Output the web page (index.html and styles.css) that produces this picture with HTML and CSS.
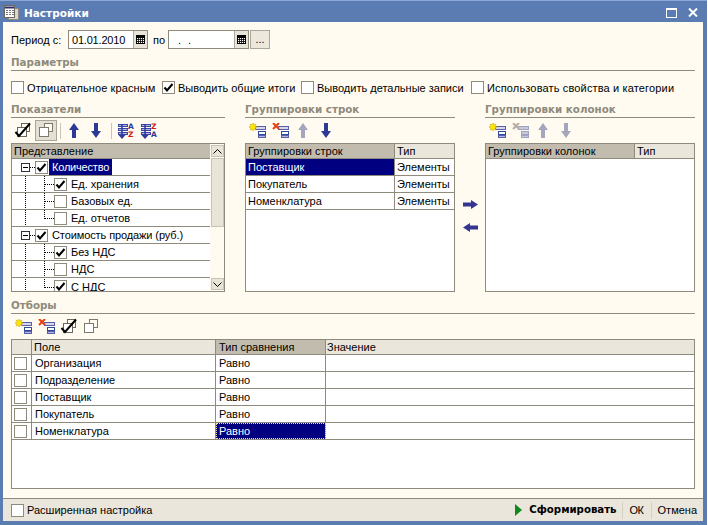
FILE: index.html
```html
<!DOCTYPE html>
<html lang="ru">
<head>
<meta charset="utf-8">
<title>Настройки</title>
<link rel="stylesheet" href="styles.css">
</head>
<body>
<svg class="defs" width="0" height="0">
  <defs>
    <g id="add">
      <rect x="6.500" y="3.500" width="10" height="3" fill="#d4d6ee" stroke="#5a60a8"/>
      <rect x="9.500" y="8.500" width="7" height="3" fill="#fff" stroke="#2f4c9c"/>
      <rect x="9.500" y="12.500" width="7" height="2" fill="#b4b8e0" stroke="#5a60a8"/>
      <path d="M4 0l1 2 2-1-1 2 2 1-2 1 1 2-2-1-1 2-1-2-2 1 1-2-2-1 2-1-1-2 2 1z" fill="#ffe600" stroke="#c9a800" stroke-width=".5"/>
    </g>
    <g id="del">
      <rect x="6.500" y="3.500" width="10" height="3" fill="#d4d6ee" stroke="#5a60a8"/>
      <rect x="9.500" y="8.500" width="7" height="3" fill="#fff" stroke="#2f4c9c"/>
      <rect x="9.500" y="12.500" width="7" height="2" fill="#b4b8e0" stroke="#5a60a8"/>
      <path d="M1 0l6 6M7 0L1 6" stroke="#e8400c" stroke-width="2" fill="none"/>
    </g>
    <g id="delOff">
      <rect x="6.500" y="3.500" width="10" height="3" fill="#c6c8dc" stroke="#a0a2c0"/>
      <rect x="9.500" y="8.500" width="7" height="3" fill="#c6c8dc" stroke="#a0a2c0"/>
      <rect x="9.500" y="12.500" width="7" height="2" fill="#c6c8dc" stroke="#a0a2c0"/>
      <path d="M1 0l6 6M7 0L1 6" stroke="#b8aca0" stroke-width="2" fill="none"/>
    </g>
    <path id="up" d="M3 15V7H0L5 0l5 7H7v8z"/>
    <path id="down" d="M3 0v8H0l5 7 5-7H7V0z"/>
    <g id="checkall">
      <rect x="7.500" y="1.500" width="8" height="8" fill="#fffbf0" stroke="#6b675e"/>
      <rect x="3.500" y="5.500" width="9" height="9" fill="#fff" stroke="#6b675e"/>
      <path d="M1.500 10l3.500 4 11-12.500" stroke="#000" stroke-width="2" fill="none"/>
    </g>
    <g id="uncheckall">
      <rect x="7.500" y="1.500" width="8" height="8" fill="#fffbf0" stroke="#7d796e"/>
      <rect x="2.500" y="5.500" width="9" height="9" fill="#fff" stroke="#7d796e"/>
    </g>
    <g id="sortaz">
      <rect x="1.500" y="1.500" width="9" height="2" fill="#b4b8e0" stroke="#3a46a4"/>
      <rect x="1.500" y="5.500" width="9" height="2" fill="#b4b8e0" stroke="#3a46a4"/>
      <rect x="1.500" y="9.500" width="9" height="2" fill="#b4b8e0" stroke="#3a46a4"/>
      <path d="M5 1v12" stroke="#2f3a9c" stroke-width="1.500"/>
      <path d="M1.500 12h7L5 16z" fill="#2f3a9c"/>
    </g>
    <path id="tick" d="M2.500 6.500l2.500 3 5.500-6.500" fill="none" stroke="#000" stroke-width="2"/>
    <g id="cal">
      <rect x="0.500" y="0.500" width="8" height="8" fill="#fff" stroke="#000"/>
      <path d="M0 2h9" stroke="#000" stroke-width="2"/>
      <path d="M2.500 3v5M4.500 3v5M6.500 3v5M1 4.500h7M1 6.500h7" stroke="#000" stroke-width=".8"/>
    </g>
  </defs>
</svg>

<div class="window">
  <header class="titlebar">
    <svg class="title-icon" width="17" height="17" viewBox="0 0 17 17">
      <rect x="5.500" y="4.500" width="10" height="11" fill="#d9d6cc" stroke="#8a8880"/>
      <rect x="1.500" y="1.500" width="10" height="12" fill="#fff" stroke="#6a6860"/>
      <path d="M2 3.500h9" stroke="#2a2a70" stroke-width="2"/>
      <path d="M3 6.500h2M6 6.500h2M9 6.500h2M3 8.500h2M6 8.500h2M9 8.500h2M3 10.500h2M6 10.500h2M9 10.500h2" stroke="#777"/>
    </svg>
    <span class="title-text">Настройки</span>
    <span class="title-buttons">
      <svg width="11" height="10" viewBox="0 0 11 10"><rect x="0.500" y="0.500" width="10" height="9" fill="none" stroke="#fff"/><path d="M0 1.500h11" stroke="#fff"/></svg>
      <svg width="10" height="9" viewBox="0 0 10 9"><path d="M1 .5l8 8M9 .5l-8 8" stroke="#fff" stroke-width="2"/></svg>
    </span>
  </header>

  <main class="content">
    <div class="period">
      <span class="period-label">Период с:</span>
      <span class="date-field date-a"><span class="date-value">01.01.2010</span><span class="cal-btn"><svg width="9" height="9"><use href="#cal"/></svg></span></span>
      <span class="period-to">по</span>
      <span class="date-field date-b"><span class="date-value empty">. .</span><span class="cal-btn"><svg width="9" height="9"><use href="#cal"/></svg></span></span>
      <span class="dots-btn">...</span>
    </div>

    <h2 class="group group-params">Параметры</h2>
    <div class="params">
      <label class="opt opt-first"><span class="box"></span>Отрицательное красным</label>
      <label class="opt"><span class="box"><svg width="13" height="13"><use href="#tick"/></svg></span>Выводить общие итоги</label>
      <label class="opt"><span class="box"></span>Выводить детальные записи</label>
      <label class="opt opt-long"><span class="box"></span>Использовать свойства и категории</label>
    </div>

    <div class="columns">
      <section class="col col-a">
        <h2 class="group">Показатели</h2>
        <div class="toolbar tb-a">
          <svg class="ic t-check" width="18" height="17"><use href="#checkall"/></svg>
          <span class="pressed"><svg width="18" height="17"><use href="#uncheckall"/></svg></span>
          <i class="sep sep-1"></i>
          <svg class="ic blue t-up" width="10" height="15"><use href="#up"/></svg>
          <svg class="ic blue t-down" width="10" height="15"><use href="#down"/></svg>
          <i class="sep sep-2"></i>
          <span class="sort sort-1"><svg width="11" height="16"><use href="#sortaz"/></svg><b class="sa">A</b><b class="sz">Z</b></span>
          <span class="sort sort-2"><svg width="11" height="16"><use href="#sortaz"/></svg><b class="sz">Z</b><b class="sa">A</b></span>
        </div>
        <div class="tree">
          <div class="tree-body">
            <div class="tree-head">Представление</div>
            <div class="trow"><span class="guide lvl0"><i class="minus"></i></span><span class="box sm"><svg width="13" height="13"><use href="#tick"/></svg></span><span class="selected">Количество</span></div>
            <div class="trow child"><span class="guide lvl1 mid"></span><span class="box sm"><svg width="13" height="13"><use href="#tick"/></svg></span><span class="tlabel">Ед. хранения</span></div>
            <div class="trow child"><span class="guide lvl1 mid"></span><span class="box sm"></span><span class="tlabel">Базовых ед.</span></div>
            <div class="trow child"><span class="guide lvl1 end"></span><span class="box sm"></span><span class="tlabel">Ед. отчетов</span></div>
            <div class="trow"><span class="guide lvl0"><i class="minus"></i></span><span class="box sm"><svg width="13" height="13"><use href="#tick"/></svg></span><span class="tlabel-0">Стоимость продажи (руб.)</span></div>
            <div class="trow child"><span class="guide lvl1 mid"></span><span class="box sm"><svg width="13" height="13"><use href="#tick"/></svg></span><span class="tlabel">Без НДС</span></div>
            <div class="trow child"><span class="guide lvl1 mid"></span><span class="box sm"></span><span class="tlabel">НДС</span></div>
            <div class="trow child last"><span class="guide lvl1 end"></span><span class="box sm"><svg width="13" height="13"><use href="#tick"/></svg></span><span class="tlabel">С НДС</span></div>
          </div>
          <div class="scrollbar">
            <span class="sb-btn"><svg width="9" height="5"><path d="M.5 4.500l4-4 4 4" fill="none" stroke="#000"/></svg></span>
            <span class="sb-thumb"></span>
            <span class="sb-track"></span>
            <span class="sb-btn"><svg width="9" height="5"><path d="M.5 .5l4 4 4-4" fill="none" stroke="#000"/></svg></span>
          </div>
        </div>
      </section>

      <section class="col col-b">
        <h2 class="group">Группировки строк</h2>
        <div class="toolbar tb-b">
          <svg class="ic t-add" width="18" height="16"><use href="#add"/></svg>
          <svg class="ic t-del" width="18" height="16"><use href="#del"/></svg>
          <svg class="ic off t-up" width="10" height="15"><use href="#up"/></svg>
          <svg class="ic blue t-down2" width="10" height="15"><use href="#down"/></svg>
        </div>
        <div class="grid-box">
          <div class="g-row g-head"><span class="g-a active">Группировки строк</span><span class="g-b">Тип</span></div>
          <div class="g-row"><span class="g-a sel">Поставщик</span><span class="g-b">Элементы</span></div>
          <div class="g-row"><span class="g-a">Покупатель</span><span class="g-b">Элементы</span></div>
          <div class="g-row"><span class="g-a">Номенклатура</span><span class="g-b">Элементы</span></div>
        </div>
      </section>

      <div class="movers">
        <svg width="15" height="9"><path d="M0 2.500h8V0l7 4.500L8 9V6.500H0z" fill="#35358f"/></svg>
        <svg width="15" height="9"><path d="M15 2.500H7V0L0 4.500 7 9V6.500h8z" fill="#35358f"/></svg>
      </div>

      <section class="col col-c">
        <h2 class="group">Группировки колонок</h2>
        <div class="toolbar tb-b">
          <svg class="ic t-add" width="18" height="16"><use href="#add"/></svg>
          <svg class="ic t-del" width="18" height="16"><use href="#delOff"/></svg>
          <svg class="ic off t-up" width="10" height="15"><use href="#up"/></svg>
          <svg class="ic off t-down2" width="10" height="15"><use href="#down"/></svg>
        </div>
        <div class="grid-box">
          <div class="g-row g-head"><span class="g-a active">Группировки колонок</span><span class="g-b">Тип</span></div>
        </div>
      </section>
    </div>

    <h2 class="group filters-title">Отборы</h2>
    <div class="toolbar tb-f">
      <svg class="ic t-add" width="18" height="16"><use href="#add"/></svg>
      <svg class="ic t-del" width="18" height="16"><use href="#del"/></svg>
      <svg class="ic t-f3" width="18" height="17"><use href="#checkall"/></svg>
      <svg class="ic t-f3" width="18" height="17"><use href="#uncheckall"/></svg>
    </div>
    <div class="filters">
      <div class="f-row f-head"><span class="f-c"></span><span class="f-a">Поле</span><span class="f-b active">Тип сравнения</span><span class="f-v">Значение</span></div>
      <div class="f-row"><span class="f-c"><span class="box sm"></span></span><span class="f-a">Организация</span><span class="f-b">Равно</span><span class="f-v"></span></div>
      <div class="f-row"><span class="f-c"><span class="box sm"></span></span><span class="f-a">Подразделение</span><span class="f-b">Равно</span><span class="f-v"></span></div>
      <div class="f-row"><span class="f-c"><span class="box sm"></span></span><span class="f-a">Поставщик</span><span class="f-b">Равно</span><span class="f-v"></span></div>
      <div class="f-row"><span class="f-c"><span class="box sm"></span></span><span class="f-a">Покупатель</span><span class="f-b">Равно</span><span class="f-v"></span></div>
      <div class="f-row"><span class="f-c"><span class="box sm"></span></span><span class="f-a">Номенклатура</span><span class="f-b focus">Равно</span><span class="f-v"></span></div>
    </div>
  </main>

  <footer class="bottom">
    <label class="opt"><span class="box"></span>Расширенная настройка</label>
    <span class="actions">
      <span class="act act-main"><svg width="7" height="12"><path d="M0 0l7 6-7 6z" fill="#0f8a1e"/></svg><b>Сформировать</b></span>
      <span class="act act-ok">ОК</span>
      <span class="act act-last">Отмена</span>
    </span>
  </footer>
</div>
</body>
</html>
```
FILE: styles.css
```css
* { box-sizing: border-box; }
html, body { margin: 0; padding: 0; width: 708px; height: 525px; overflow: hidden; background: #fff; }
body { font: 11px/14px "Liberation Sans", Arial, sans-serif; color: #000; }
.defs { display: block; height: 0; }
.window { width: 707px; height: 525px; display: flex; flex-direction: column; background: #5b7cb3; border-top: 1px solid #8da8d8; padding: 0 4px 4px 3px; }
.titlebar { height: 21px; display: flex; align-items: center; color: #fff; flex: none; margin: 0 -4px 0 -3px; padding: 2px 9px 0 3px; }
.title-icon { margin-right: 4px; }
.title-text { font: bold 10.500px/14px "DejaVu Sans", sans-serif; }
.title-buttons { margin-left: auto; display: flex; align-items: center; gap: 11px; }
.content { flex: 1; background: #fffbf0; padding: 8px 8px 0 8px; display: flex; flex-direction: column; min-height: 0; }
.period { display: flex; align-items: center; height: 19px; flex: none; }
.period-label { width: 57px; }
.period-to { width: 20px; padding-left: 5px; }
.date-field { height: 19px; display: flex; border: 1px solid #8e8a7c; background: #fff; }
.date-a { width: 80px; }
.date-b { width: 81px; }
.date-value { flex: 1; padding: 2px 0 0 3px; letter-spacing: -.2px; }
.date-value.empty { padding-left: 9px; letter-spacing: 2px; }
.cal-btn { width: 14px; background: #e9e4d8; border-left: 1px solid #aca899; display: flex; align-items: center; justify-content: center; }
.dots-btn { width: 20px; height: 19px; margin-left: 1px; background: #ece8dc; border: 1px solid #aca899; text-align: center; line-height: 17px; }
.group { margin: 0; font: bold 10.300px/14px "DejaVu Sans", sans-serif; color: #8e8a7c; border-bottom: 1px solid #8e8a7c; height: 16px; overflow: hidden; white-space: nowrap; flex: none; }
.group-params { margin-top: 6px; }
.params { display: flex; height: 17px; margin-top: 8px; flex: none; }
.opt { display: inline-flex; align-items: center; white-space: nowrap; }
.params .opt:nth-child(1) { width: 151px; }
.params .opt:nth-child(2) { width: 139px; }
.params .opt:nth-child(3) { width: 170px; }
.opt-first { letter-spacing: .1px; }
.opt-long { letter-spacing: .15px; }
.box { width: 13px; height: 13px; flex: none; background: #fff; border: 1px solid #8e8a7c; display: inline-block; margin-right: 3px; position: relative; }
.box svg { display: block; margin: -1px; }
.columns { display: flex; margin-top: 6px; height: 190px; flex: none; }
.col { display: flex; flex-direction: column; }
.col-a { width: 214px; }
.col-b { width: 210px; margin-left: 20px; }
.col-c { width: 210px; }
.movers { width: 30px; display: flex; flex-direction: column; align-items: center; gap: 14px; padding-top: 98px; }
.toolbar { display: flex; align-items: center; height: 25px; flex: none; }
.ic { display: block; flex: none; }
.ic.blue { fill: #2c3a96; }
.ic.off { fill: #a3a6bc; }
.t-check { margin-left: 3px; }
.pressed { width: 22px; height: 21px; margin-left: 3px; background: #e4e0d4; border: 1px solid #a9a596; display: flex; align-items: center; justify-content: center; flex: none; }
.sep { width: 1px; height: 16px; background: #c9c5b6; flex: none; }
.sep-1 { margin-left: 3px; }
.t-up { margin-left: 8px; }
.t-down { margin-left: 12px; }
.sep-2 { margin-left: 10px; }
.t-add { margin-left: 4px; }
.t-del { margin-left: 5px; }
.t-down2 { margin-left: 13px; }
.t-f3 { margin-left: 4px; }
.sort { display: inline-flex; position: relative; width: 16px; height: 16px; flex: none; }
.sort-1 { margin-left: 5px; }
.sort-2 { margin-left: 7px; }
.sa, .sz { font: bold 7.500px/8px "DejaVu Sans", sans-serif; position: absolute; left: 11px; top: 0; }
.sa { color: #2c3a96; }
.sz { color: #d11a1a; }
.sort b:last-child { top: 8px; }
.tree { height: 149px; display: flex; border: 1px solid #8e8a7c; background: #fff; }
.tree-body { flex: 1; min-width: 0; overflow: hidden; }
.tree-head { height: 15px; background: #c2bcae; border-bottom: 1px solid #8e8a7c; padding-left: 2px; line-height: 14px; }
.trow { height: 17px; border-bottom: 1px solid #8e8a7c; display: flex; align-items: center; padding-left: 9px; white-space: nowrap; }
.trow.last { border-bottom: 0; }
.guide { display: block; height: 16px; position: relative; flex: none; }
.lvl0 { width: 14px; }
.lvl1 { width: 33px; background-image: linear-gradient(#000 50%, transparent 50%); background-size: 1px 2px; background-repeat: repeat-y; background-position: 4px 0; }
.lvl1::before { content: ""; position: absolute; left: 23px; top: 0; width: 1px; height: 9px; background-image: linear-gradient(#000 50%, transparent 50%); background-size: 1px 2px; }
.lvl1.mid::before { height: 16px; }
.lvl1::after { content: ""; position: absolute; left: 24px; top: 8px; width: 9px; height: 1px; background-image: linear-gradient(90deg, #000 50%, transparent 50%); background-size: 2px 1px; }
.minus { position: absolute; left: 0; top: 4px; width: 9px; height: 9px; border: 1px solid #333; background: #fff; }
.minus::before { content: ""; position: absolute; left: 1px; top: 3px; width: 5px; height: 1px; background: #000; }
.minus::after { content: ""; position: absolute; left: 8px; top: 3px; width: 5px; height: 1px; background-image: linear-gradient(90deg, #000 50%, transparent 50%); background-size: 2px 1px; }
.box.sm { margin-right: 1px; }
.selected { background: #000080; color: #fff; padding: 0 3px; height: 16px; line-height: 16px; letter-spacing: -.2px; }
.tlabel { margin-left: 3px; }
.tlabel-0 { margin-left: 3px; letter-spacing: -.1px; }
.scrollbar { width: 14px; flex: none; border-left: 1px solid #fffbf0; padding: 1px 0; display: flex; flex-direction: column; background: #fffbf0; }
.sb-btn { height: 12px; background: #e9e4d8; border: 1px solid #c9c5b6; display: flex; align-items: center; justify-content: center; flex: none; }
.sb-thumb { height: 69px; margin-top: 1px; background: #e9e4d8; border: 1px solid #c9c5b6; flex: none; }
.sb-track { flex: 1; }
.grid-box { height: 149px; border: 1px solid #8e8a7c; background: #fff; }
.g-row { height: 17px; display: flex; border-bottom: 1px solid #8e8a7c; line-height: 16px; }
.g-row.g-head { height: 15px; background: #ebe6db; line-height: 14px; }
.g-a { width: 149px; padding-left: 2px; border-right: 1px solid #8e8a7c; }
.g-b { flex: 1; padding-left: 2px; }
.g-a.active { background: #c2bcae; }
.sel { background: #000080; color: #fff; }
.filters-title { margin-top: 6px; }
.filters { height: 150px; flex: none; border: 1px solid #8e8a7c; background: #fff; }
.f-row { display: flex; height: 17px; border-bottom: 1px solid #8e8a7c; line-height: 16px; }
.f-row.f-head { height: 15px; background: #ebe6db; line-height: 14px; }
.f-c { width: 20px; border-right: 1px solid #8e8a7c; display: flex; align-items: center; padding-left: 2px; flex: none; }
.f-a { width: 184px; padding-left: 3px; border-right: 1px solid #8e8a7c; flex: none; }
.f-head .f-a { padding-left: 2px; }
.f-b { width: 110px; padding-left: 3px; border-right: 1px solid #8e8a7c; flex: none; }
.f-b.active { background: #c2bcae; }
.f-v { flex: 1; padding-left: 1px; }
.focus { background: #000080; color: #fff; outline: 1px dotted #ffe680; outline-offset: -1px; }
.bottom { height: 23px; flex: none; background: #ebe6db; border-top: 1px solid #8e8a7c; display: flex; align-items: center; padding: 0 6px 0 8px; }
.actions { margin-left: auto; display: flex; align-items: center; height: 17px; }
.act { height: 17px; padding: 0 7px; border-left: 1px solid #d5d0c2; display: inline-flex; align-items: center; }
.act-main { border-left: 0; gap: 7px; padding-right: 5px; }
.act-ok { letter-spacing: -.5px; }
.act-last { padding: 0 0 0 6px; }
.act-main b { font: bold 10.200px/14px "DejaVu Sans", sans-serif; }
```
